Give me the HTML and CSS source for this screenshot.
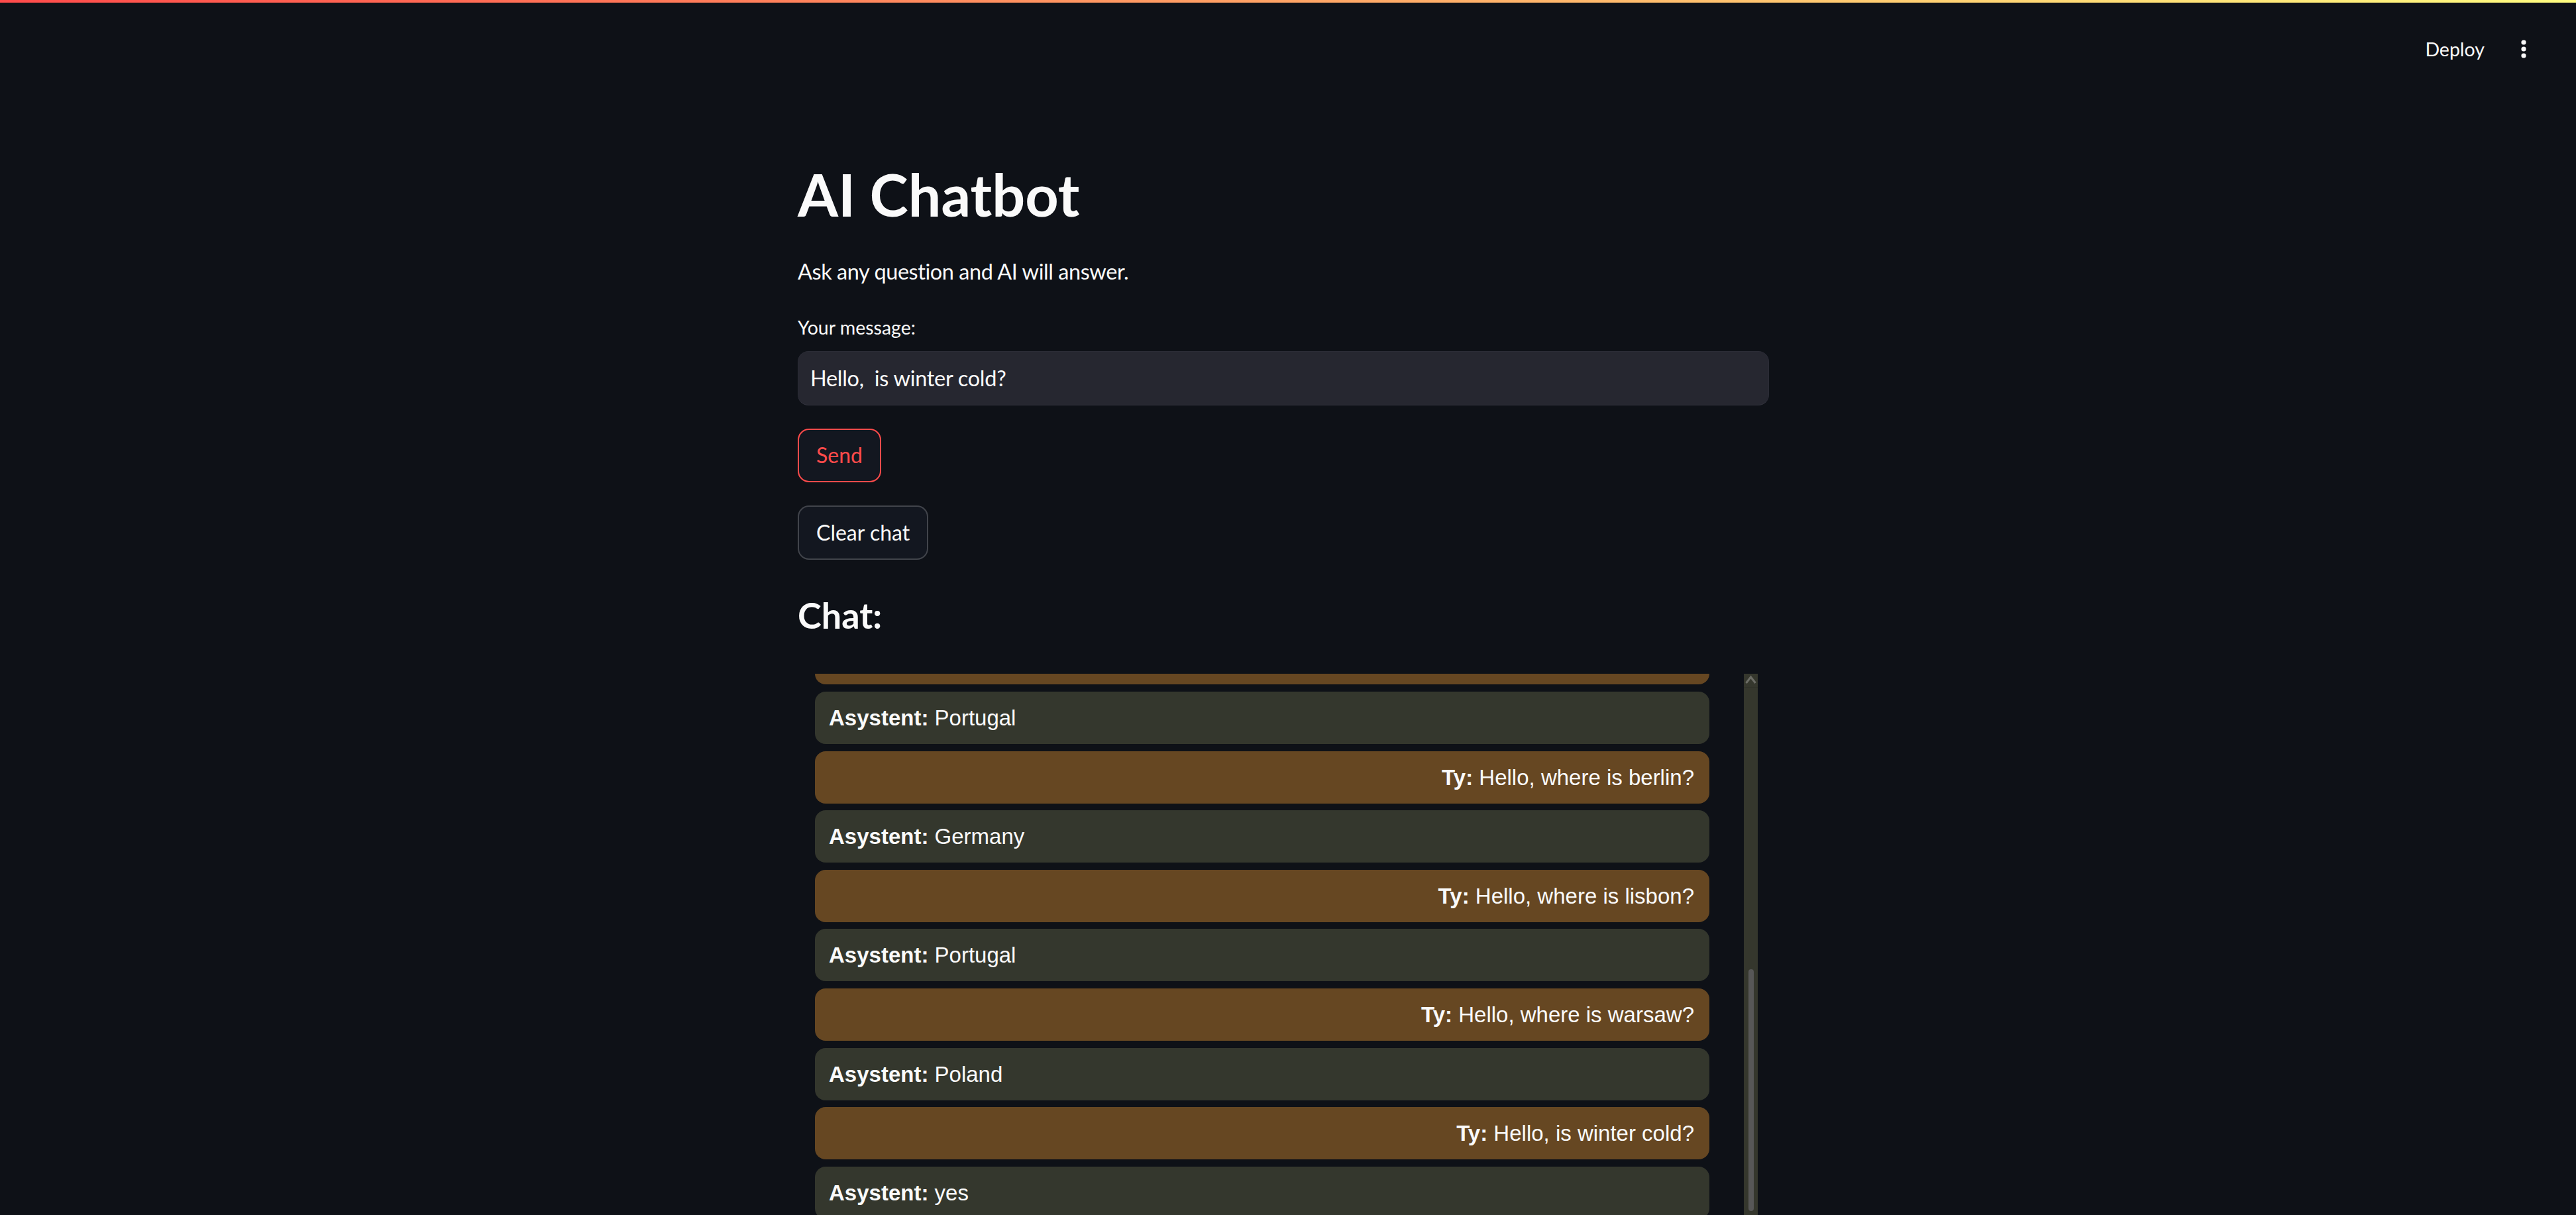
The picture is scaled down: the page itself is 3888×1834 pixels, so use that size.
FILE: index.html
```html
<!DOCTYPE html>
<html lang="en">
<head>
<meta charset="utf-8">
<title>AI Chatbot</title>
<link rel="stylesheet" href="styles.css">
</head>
<body>
<div class="decoration"></div>
<header class="header">
  <span class="deploy">Deploy</span>
  <span class="kebab">
    <svg width="30" height="30" viewBox="0 0 30 30"><circle cx="15" cy="5" r="3.6" fill="#fafafa"/><circle cx="15" cy="15" r="3.6" fill="#fafafa"/><circle cx="15" cy="25" r="3.6" fill="#fafafa"/></svg>
  </span>
</header>
<div class="app">
  <main class="main">
    <h1 class="title">AI Chatbot</h1>
    <p class="subtitle">Ask any question and AI will answer.</p>
    <label class="label">Your message:</label>
    <div class="input">Hello,&nbsp; is winter cold?</div>
    <button class="btn btn-focus">Send</button>
    <button class="btn btn-clear">Clear chat</button>
    <h3 class="chat-heading">Chat:</h3>
    <div class="chat-box">
      <div class="chat-viewport">
        <div class="chat-list">
          <div class="bubble user partial"></div>
          <div class="bubble bot"><b>Asystent:</b> Portugal</div>
          <div class="bubble user"><b>Ty:</b> Hello, where is berlin?</div>
          <div class="bubble bot"><b>Asystent:</b> Germany</div>
          <div class="bubble user"><b>Ty:</b> Hello, where is lisbon?</div>
          <div class="bubble bot"><b>Asystent:</b> Portugal</div>
          <div class="bubble user"><b>Ty:</b> Hello, where is warsaw?</div>
          <div class="bubble bot"><b>Asystent:</b> Poland</div>
          <div class="bubble user"><b>Ty:</b> Hello, is winter cold?</div>
          <div class="bubble bot"><b>Asystent:</b> yes</div>
        </div>
      </div>
      <div class="scrollbar">
        <div class="sb-button sb-up">
          <svg width="21" height="20" viewBox="0 0 21 20"><polyline points="3.5,14 10.5,5 17.5,14" fill="none" stroke="#6c6d66" stroke-width="3"/></svg>
        </div>
        <div class="sb-track"><div class="sb-thumb"></div></div>
        <div class="sb-button sb-down">
          <svg width="21" height="20" viewBox="0 0 21 20"><polyline points="3.5,6 10.5,15 17.5,6" fill="none" stroke="#6c6d66" stroke-width="3"/></svg>
        </div>
      </div>
    </div>
  </main>
</div>
</body>
</html>
```
FILE: styles.css
```css
html, body {
  margin: 0;
  padding: 0;
  background: #0e1117;
  color: #fafafa;
  overflow: hidden;
  font-family: Lato, "Noto Sans", sans-serif;
}

.decoration {
  height: 4px;
  background: linear-gradient(90deg, rgb(255, 75, 75), rgb(255, 253, 128));
}

.header {
  height: 140px;
  display: flex;
  align-items: center;
  justify-content: flex-end;
  padding-right: 64px;
}

.deploy {
  font-size: 28.5px;
  line-height: 1.2;
  margin-right: 44px;
  color: #fafafa;
}

.kebab {
  display: flex;
  width: 30px;
  height: 30px;
}

.app {
  padding-right: 14px;
}

.main {
  width: 1466px;
  margin: 0 auto;
  padding-top: 97px;
  display: flex;
  flex-direction: column;
  align-items: flex-start;
}

.title {
  margin: 0;
  font-size: 88px;
  line-height: 105.6px;
  font-weight: 700;
  color: #fafafa;
}

.subtitle {
  margin: 43.8px 0 0;
  font-size: 32.5px;
  line-height: 39.6px;
  letter-spacing: -0.45px;
}

.label {
  display: block;
  margin-top: 47.4px;
  font-size: 28.5px;
  line-height: 34.8px;
}

.input {
  margin-top: 17.8px;
  box-sizing: border-box;
  width: 1466px;
  height: 82px;
  background: #262730;
  border: 1px solid #2b2c36;
  border-bottom-color: #30313b;
  border-radius: 16px;
  padding-left: 18px;
  display: flex;
  align-items: center;
  font-size: 32.5px;
  letter-spacing: -0.3px;
  white-space: pre;
}

.btn {
  margin-top: 35px;
  box-sizing: border-box;
  height: 81px;
  padding: 0 26px;
  border-radius: 17px;
  background: #131720;
  border: 2px solid rgba(250, 250, 250, 0.2);
  color: #fafafa;
  font-family: Lato, "Noto Sans", sans-serif;
  font-size: 32px;
  line-height: 1.2;
}

.btn-focus {
  border-color: rgb(255, 75, 75);
  color: rgb(255, 75, 75);
}

.btn-clear {
  height: 82px;
}

.chat-heading {
  margin: 51.7px 0 0;
  font-size: 54px;
  line-height: 64.8px;
  font-weight: 700;
}

.chat-box {
  margin-top: 55.5px;
  width: 1449px;
  height: 836px;
  display: flex;
}

.chat-viewport {
  flex: 1;
  overflow: hidden;
  padding: 0 52px 0 26px;
}

.chat-list {
  margin-top: -62.6px;
  display: flex;
  flex-direction: column;
  gap: 10.6px;
}

.bubble {
  box-sizing: border-box;
  height: 79px;
  padding: 21px 23px 21px 21px;
  border-radius: 16px;
  font-family: "Liberation Sans", Arial, sans-serif;
  font-size: 33px;
  line-height: 37px;
  color: #fafafa;
}

.bubble b {
  font-weight: 700;
}

.user {
  background: #664722;
  text-align: right;
}

.bot {
  background: #34372d;
  text-align: left;
}

.scrollbar {
  width: 21px;
  background: #35372d;
  display: flex;
  flex-direction: column;
}

.sb-button {
  height: 20px;
  display: flex;
}

.sb-up {
  border-bottom: 1px solid #2f3128;
}

.sb-track {
  flex: 1;
}

.sb-thumb {
  margin: 425px 0 0 7px;
  width: 8px;
  height: 365px;
  border-radius: 4px;
  background: #575757;
}
```
